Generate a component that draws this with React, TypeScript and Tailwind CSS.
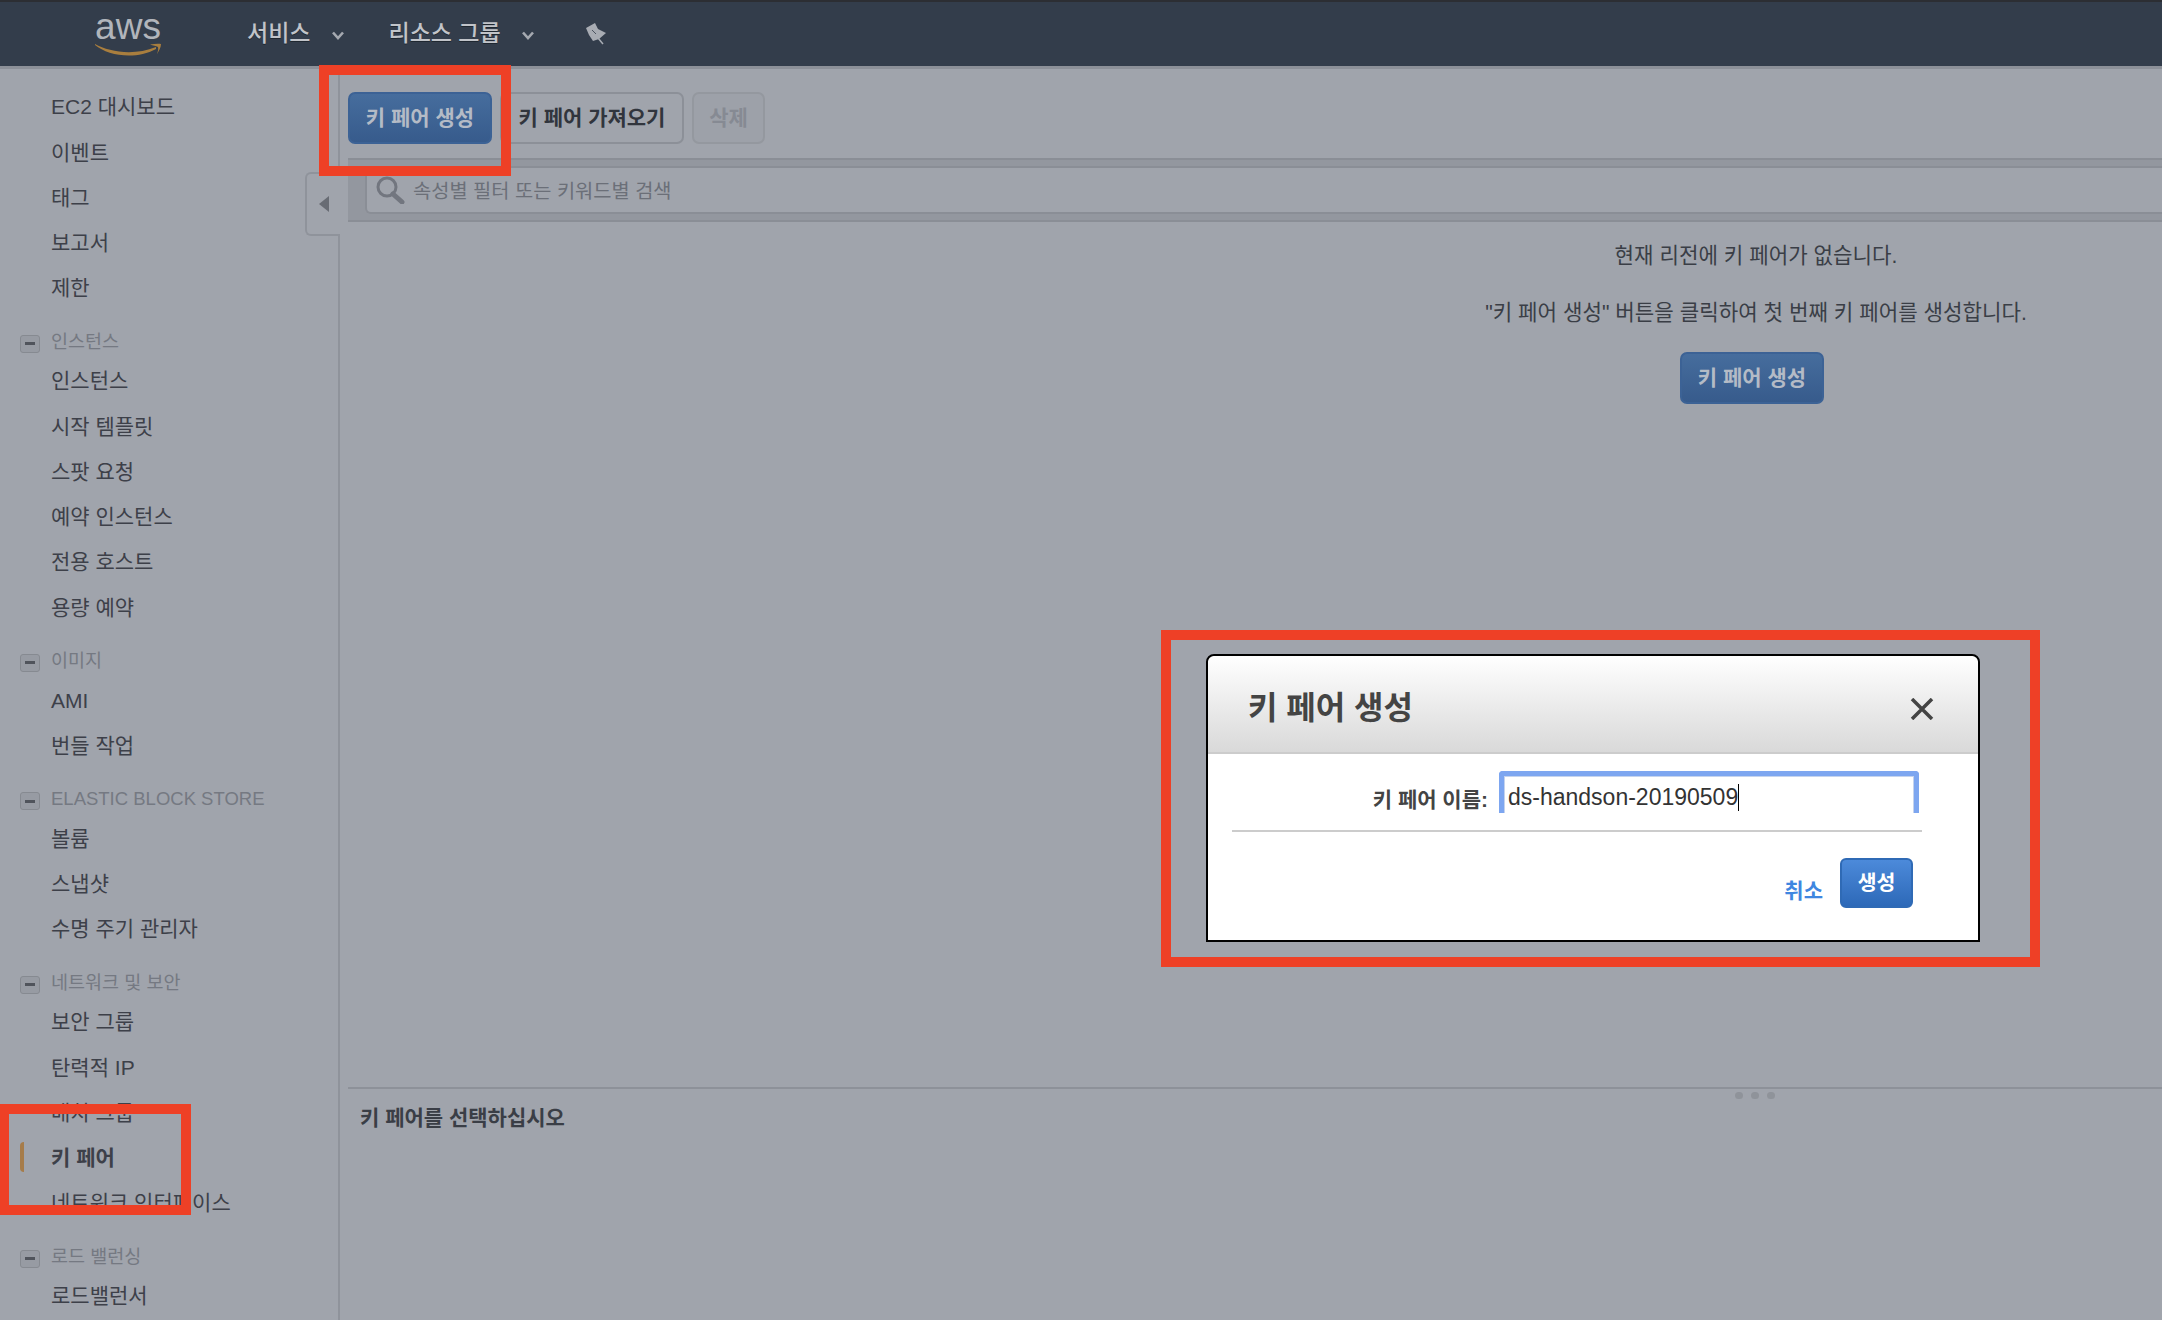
const sections = [
  { title: "", items: ["EC2 대시보드", "이벤트", "태그", "보고서", "제한"] },
  { title: "인스턴스", items: ["인스턴스", "시작 템플릿", "스팟 요청", "예약 인스턴스", "전용 호스트", "용량 예약"] },
  { title: "이미지", items: ["AMI", "번들 작업"] },
  { title: "ELASTIC BLOCK STORE", items: ["볼륨", "스냅샷", "수명 주기 관리자"] },
  { title: "네트워크 및 보안", items: ["보안 그룹", "탄력적 IP", "배치 그룹", "키 페어", "네트워크 인터페이스"] },
  { title: "로드 밸런싱", items: ["로드밸런서"] },
];

function Chevron() {
  return (
    <svg width="14" height="9" viewBox="0 0 14 9" fill="none" stroke="#a5a9b0" strokeWidth="2.6">
      <path d="M2 1.5 L7 7 L12 1.5" />
    </svg>
  );
}

function AwsLogo() {
  return (
    <div className="flex w-[68px] flex-col items-center">
      <span className="h-[29px] text-[37px] leading-[26px] text-[#b1b5bb]">aws</span>
      <svg width="68" height="14" viewBox="0 0 68 14" fill="#a97e3e">
        <path d="M1 1 C15 9 40 13 62 4 L62 6 C42 17 14 13 1 2 Z" />
        <path d="M56 1.500 C60 1 64 0.500 67 1 C67 4 65 8 63 11 C64 8 64.500 6 64 4 C62 3 59 2.500 56 1.500 Z" />
      </svg>
    </div>
  );
}

function Header() {
  return (
    <header className="flex h-[69px] items-start border-t-2 border-b-[3px] border-t-[#2c2e33] border-b-[#8c9098] bg-[#333d4b] text-[23px] text-[#c1c4c9]">
      <div className="ml-[94px] mt-[12px]">
        <AwsLogo />
      </div>
      <div className="ml-[85px] flex h-[62px] items-center [text-shadow:0_1px_0_#1f2730]">
        <span className="font-medium">서비스</span>
        <span className="ml-[21px] mt-[4px]">
          <Chevron />
        </span>
        <span className="ml-[43px] font-medium">리소스 그룹</span>
        <span className="ml-[20px] mt-[4px]">
          <Chevron />
        </span>
        <svg width="24" height="26" viewBox="0 0 24 26" className="ml-[49px]" fill="#a8acb3">
          <path d="M2 8 L11 3 L14 9 L22 13 L15 19 L9 21 L5 15 Z" />
          <path d="M14 18 L19 24" stroke="#a8acb3" strokeWidth="1.500" />
          <path d="M8 10 L12 14" stroke="#4d5561" strokeWidth="1" />
        </svg>
      </div>
    </header>
  );
}

function Sidebar() {
  return (
    <aside className="relative w-[340px] shrink-0 border-r-2 border-[#8f939b] pt-[15.5px] text-[21px] text-[#3d4049]">
      {sections.map((section) => (
        <div key={section.title}>
          {section.title && (
            <div className="mt-3 flex h-[35.75px] items-center pl-[20px]">
              <span className="mt-[6px] flex h-[18px] w-[20px] items-center justify-center rounded-[3px] border border-[#868a91] bg-[#979ba3]">
                <span className="h-[3px] w-[10px] bg-[#50545c]" />
              </span>
              <span className="ml-[11px] mt-[2px] text-[18.500px] text-[#757982]">{section.title}</span>
            </div>
          )}
          {section.items.map((item) => {
            const active = item === "키 페어";
            return (
              <div key={item} className="relative flex h-[45.25px] items-center whitespace-nowrap pl-[51px]">
                {active && <span className="absolute left-[20px] top-[7px] h-[30px] w-[4px] rounded-l-sm bg-[#a67c4a]" />}
                <span className={active ? "font-bold" : ""}>{item}</span>
              </div>
            );
          })}
        </div>
      ))}
      <div className="absolute -right-[2px] top-[103px] flex h-[64px] w-[35px] items-center rounded-bl-md rounded-tl-md border-y-2 border-l-2 border-[#8f939b] bg-[#a0a4ac] pl-[12px]">
        <span className="h-0 w-0 border-y-[8px] border-r-[10px] border-y-transparent border-r-[#686c74]" />
      </div>
    </aside>
  );
}

function PrimaryDim() {
  return (
    <button
      type="button"
      className="h-[52px] w-[144px] rounded-[7px] border-2 border-[#3c6295] bg-gradient-to-b from-[#466d9d] to-[#375b8c] text-[21px] font-bold text-[#b4bbc6]"
    >
      키 페어 생성
    </button>
  );
}

function Main() {
  return (
    <main className="flex min-w-0 flex-1 flex-col pl-[8px]">
      <div className="flex h-[89px] items-start gap-[8px] pt-[23px]">
        <PrimaryDim />
        <button
          type="button"
          className="h-[52px] w-[184px] rounded-[7px] border-2 border-[#8c9098] bg-[#a0a4ac] text-[21px] font-bold text-[#31353d]"
        >
          키 페어 가져오기
        </button>
        <button
          type="button"
          className="h-[52px] w-[73px] rounded-[7px] border-2 border-[#94989f] bg-[#9da1a9] text-[21px] font-bold text-[#868a93]"
        >
          삭제
        </button>
      </div>
      <div className="h-[64px] border-y-2 border-[#8a8e96] bg-[#93979f] pl-[17px] pt-[6px]">
        <div className="flex h-[48px] items-center rounded-l-md border-y-2 border-l-2 border-[#8a8e96] bg-[#a0a4ac] pl-[8px]">
          <svg width="30" height="28" viewBox="0 0 30 28" fill="none" stroke="#72767f">
            <circle cx="12" cy="11" r="9" strokeWidth="3" />
            <path d="M18 18 L27 26" strokeWidth="5" strokeLinecap="round" />
          </svg>
          <span className="ml-[8px] mt-[3px] text-[19.800px] text-[#6b6f78]">속성별 필터 또는 키워드별 검색</span>
        </div>
      </div>
      <div className="flex h-[865px] flex-col items-center pl-[1002px] pt-[19px] text-[21.200px] leading-[30px] text-[#3a3e46]">
        <p>현재 리전에 키 페어가 없습니다.</p>
        <p className="mt-[27px]">"키 페어 생성" 버튼을 클릭하여 첫 번째 키 페어를 생성합니다.</p>
        <div className="mr-[8px] mt-[24px]">
          <PrimaryDim />
        </div>
      </div>
      <div className="relative flex-1 border-t-2 border-[#8d9199] pl-[12px] pt-[14px]">
        <div className="absolute left-[1387px] top-[3px] flex gap-[8px]">
          <span className="h-[7px] w-[8px] rounded-full bg-[#8f939a]" />
          <span className="h-[7px] w-[8px] rounded-full bg-[#8f939a]" />
          <span className="h-[7px] w-[8px] rounded-full bg-[#8f939a]" />
        </div>
        <p className="text-[21px] font-bold leading-[30px] text-[#3a3e46]">키 페어를 선택하십시오</p>
      </div>
    </main>
  );
}

function CreateDialog() {
  return (
    <div className="absolute left-[1206px] top-[654px] flex h-[288px] w-[774px] flex-col rounded-t-lg border-2 border-black bg-white">
      <div className="flex h-[98px] shrink-0 items-center justify-between rounded-t-lg border-b-2 border-[#cccccc] bg-gradient-to-b from-white to-[#d9d9d9] pl-[40px] pr-[44px]">
        <h2 className="mt-[8px] text-[32px] font-bold text-[#444444]">키 페어 생성</h2>
        <svg width="24" height="22" viewBox="0 0 24 22" fill="none" stroke="#444444" strokeWidth="3.500" className="mt-[10px]">
          <path d="M2 1 L22 21 M22 1 L2 21" />
        </svg>
      </div>
      <div className="ml-[24px] mr-[56px] flex h-[78px] items-start justify-end border-b-2 border-[#cccccc] pr-[3px] pt-[17px]">
        <label className="mr-[11px] mt-[13px] text-[21px] font-bold text-[#444444]">키 페어 이름:</label>
        <div className="h-[42px] w-[420px] rounded-t-[4px] border-x-[5px] border-t-[5px] border-x-[#7da6f0] border-t-[#7da6f0] bg-white">
          <div className="flex h-full items-center border-x border-t border-[#c4d3ee] pl-[3px] pt-[5px] text-[23px] leading-none text-[#333333]">
            <span>ds-handson-20190509</span>
            <span className="h-[27px] w-[1px] bg-black" />
          </div>
        </div>
      </div>
      <div className="flex items-center justify-end pr-[65px] pt-[26px]">
        <a className="mr-[17px] mt-[15px] text-[21px] font-bold text-[#3f86e0]">취소</a>
        <button
          type="button"
          className="h-[50px] w-[73px] rounded-[6px] border-2 border-[#2f6ab5] bg-gradient-to-b from-[#4c8ada] to-[#2d69b8] text-[20.500px] font-bold text-white"
        >
          생성
        </button>
      </div>
    </div>
  );
}

export default function App() {
  return (
    <div
      className="relative flex h-[1320px] w-[2162px] flex-col overflow-hidden bg-[#a0a4ac]"
      style={{ fontFamily: '"Liberation Sans", "Noto Sans CJK KR", sans-serif' }}
    >
      <Header />
      <div className="flex min-h-0 flex-1">
        <Sidebar />
        <Main />
      </div>

      {/* annotation boxes drawn over the screenshot */}
      <div className="absolute left-[319px] top-[65px] h-[111px] w-[192px] border-[10px] border-[#ee4026]" />
      <div className="absolute left-[1161px] top-[630px] h-[337px] w-[879px] border-[10px] border-[#ee4026]" />
      <CreateDialog />
      <div className="absolute -left-[1px] top-[1104px] h-[111px] w-[192px] border-[10px] border-[#ee4026]" />
    </div>
  );
}
